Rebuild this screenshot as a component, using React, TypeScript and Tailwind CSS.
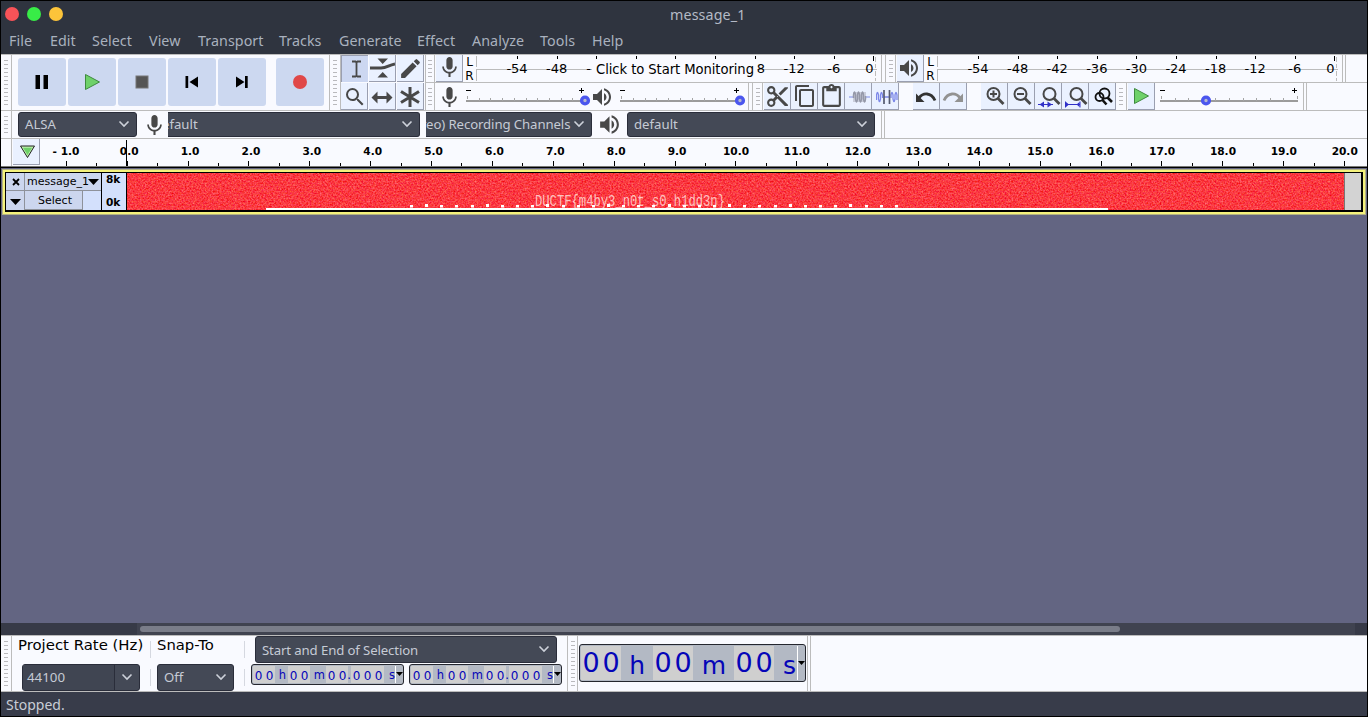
import React from "react";
import {
  MdMic, MdVolumeUp, MdContentCut, MdContentCopy, MdContentPaste, MdEdit, MdSearch,
} from "react-icons/md";

const DJ = "DejaVu Sans, sans-serif";

const menus: [string, string][] = [
  ["File", "w-[41px]"], ["Edit", "w-[42px]"], ["Select", "w-[57px]"], ["View", "w-[49px]"],
  ["Transport", "w-[81px]"], ["Tracks", "w-[60px]"], ["Generate", "w-[78px]"], ["Effect", "w-[55px]"],
  ["Analyze", "w-[68px]"], ["Tools", "w-[52px]"], ["Help", "w-[40px]"],
];

function Grip({ rows, className = "" }: { rows: number; className?: string }) {
  return (
    <div className={`flex shrink-0 items-center justify-center border-r border-[#bcbcbc] ${className}`}>
      <svg width="4" height={rows * 4 - 3} shapeRendering="crispEdges">
        {Array.from({ length: rows }, (_, i) => (
          <rect key={i} x="0" y={i * 4} width="4" height="1" fill="#b9b9bd" />
        ))}
      </svg>
    </div>
  );
}

function Btn({ children, className = "", active = false }: { children?: React.ReactNode; className?: string; active?: boolean }) {
  return (
    <div
      className={`flex h-[27px] w-[27px] shrink-0 items-center justify-center overflow-hidden ${
        active ? "border-t border-l border-[#9a9fb0] bg-[#ccd7f1]" : "border-r border-b border-[#9a9fb0] bg-[#eaf1ff]"
      } ${className}`}
    >
      {children}
    </div>
  );
}

function Meter({ overlay = false }: { overlay?: boolean }) {
  const labels = ["-54", "-48", "-42", "-36", "-30", "-24", "-18", "-12", "-6", "0"];
  return (
    <svg width="418" height="27" className="shrink-0" fontFamily={DJ} fontSize="13" textAnchor="middle">
      <g fill="none" stroke="#bcbcbc" shapeRendering="crispEdges">
        <path d="M13.5 1V12M13.5 15V26M13 14.5H410" />
        <path d="M412.5 2V13M412.5 16V26M410 14.5H414" strokeDasharray="5 2" />
      </g>
      <text x="6.5" y="10.5" fontSize="12">L</text>
      <text x="6.5" y="24.5" fontSize="12">R</text>
      {labels.map((l, i) => {
        const x = 54 + i * 39.6;
        const covered = overlay && i > 1 && i < 7;
        return (
          <g key={l}>
            <rect x={Math.round(x)} y="1" width="1" height={i === 9 ? 5 : 3} fill="#000" shapeRendering="crispEdges" />
            {!covered && <text x={i === 9 ? x - 4 : x} y="18">{l}</text>}
          </g>
        );
      })}
      {overlay && (
        <g>
          <text x="125.5" y="18">-</text>
          <text x="298" y="18">8</text>
          <rect x="129" y="5" width="165" height="19" fill="#fafaff" />
          <text x="212" y="19" fontSize="13.2" textLength="158">Click to Start Monitoring</text>
        </g>
      )}
    </svg>
  );
}

function Slider({ width, value, ticks, className = "" }: { width: number; value: number; ticks: number; className?: string }) {
  const step = (width - 2) / ticks;
  return (
    <svg width={width + 6} height="27" className={`shrink-0 ${className}`}>
      <g shapeRendering="crispEdges">
        <rect x="0" y="17" width={width} height="2" fill="#9b9b9b" />
        {Array.from({ length: ticks + 1 }, (_, i) => (
          <rect key={i} x={Math.round(i * step) + 1} y={i === 0 || i === ticks ? 13 : 15} width="1" height="3" fill="#a5a5a5" />
        ))}
        <path d={`M0 7.5H5M${width - 6} 7.5h5M${width - 3.5} 5v5`} stroke="#000" />
      </g>
      <circle cx={value} cy="17.5" r="3.4" fill="#b6b8ce" stroke="#4b56ee" strokeWidth="3.4" />
    </svg>
  );
}

function Chevron() {
  return (
    <svg width="12" height="8" viewBox="0 0 12 8" className="mb-[2px] shrink-0">
      <path d="M1.5 1.5L6 6L10.5 1.5" fill="none" stroke="#cdd1da" strokeWidth="1.6" />
    </svg>
  );
}

function Combo({ text, className }: { text: string; className: string }) {
  return (
    <div
      className={`flex shrink-0 items-center justify-between overflow-hidden border border-[#2a2d3a] bg-[#444956] pr-[6px] font-['Noto_Sans',sans-serif] text-[13.2px] whitespace-nowrap text-[#c6cbd5] ${className}`}
    >
      <span>{text}</span>
      <Chevron />
    </div>
  );
}

const PLAY = (
  <svg width="17" height="18" viewBox="0 0 17 18">
    <path d="M1.5 1.5V16.5L15.5 9Z" fill="#6ed169" stroke="#3f8a3f" strokeWidth="1" />
  </svg>
);

function TransportIcon({ kind }: { kind: string }) {
  if (kind === "play") return PLAY;
  return (
    <svg width="14" height="14" viewBox="0 0 14 14">
      {kind === "pause" && <path d="M0.5 0H5V14H0.5ZM8.5 0H13V14H8.5Z" />}
      {kind === "stop" && <rect x="1" y="1" width="12" height="12" fill="#555" stroke="#777" strokeWidth="1" />}
      {kind === "start" && <path d="M0.5 1H3.2V13H0.5ZM13 1.5V12.5L4.5 7Z" />}
      {kind === "end" && <path d="M10 1H12.7V13H10ZM1 1.5V12.5L9.5 7Z" />}
      {kind === "record" && <circle cx="7" cy="7" r="7" fill="#e04848" />}
    </svg>
  );
}

const G = "#484848";

function ZoomGlyph({ kind }: { kind: string }) {
  if (kind === "toggle")
    return (
      <svg width="22" height="22" viewBox="0 0 22 22" fill="none" stroke="#111" strokeWidth="1.8">
        <circle cx="7.5" cy="11" r="4" />
        <circle cx="12.5" cy="7.5" r="5" />
        <path d="M10.5 14L14.5 18.5M15.5 11.5L20 16" strokeWidth="2.6" />
      </svg>
    );
  const shifted = kind === "sel" || kind === "fit";
  const cx = shifted ? 12.5 : 10.5;
  return (
    <svg width="24" height="22" viewBox="0 0 24 22" fill="none" stroke={G} className="ml-[1px] shrink-0">
      <circle cx={cx} cy="8" r="6" strokeWidth="2" />
      <path d={`M${cx + 4.3} 12.3L${cx + 10} 18`} strokeWidth="2.8" />
      {kind === "in" && <path d="M7 8H14M10.5 4.5V11.5" strokeWidth="2" />}
      {kind === "out" && <path d="M7 8H14" strokeWidth="2" />}
      {kind === "sel" && (
        <g fill="#3030c8" stroke="#3030c8">
          <path d="M1 18.5H16" />
          <path d="M7 15.5V21.5L2.5 18.5ZM10.5 15.5V21.5L15 18.5Z" stroke="none" />
        </g>
      )}
      {kind === "fit" && (
        <g fill="#3030c8" stroke="#3030c8">
          <path d="M1.5 18.5H16M1.5 15.5V21.5M16 15.5V21.5" />
          <path d="M2 16V21L5 18.5ZM15.5 16V21L12.5 18.5Z" stroke="none" />
        </g>
      )}
    </svg>
  );
}

function Curl({ redo = false }: { redo?: boolean }) {
  return (
    <svg width="22" height="14" viewBox="0 0 22 14" className="shrink-0">
      <g transform={redo ? "translate(22 0) scale(-1 1)" : undefined}>
        <path d="M4 8C8 2.5 16 2 20 10.5" fill="none" stroke={redo ? "#929292" : "#333"} strokeWidth="2.8" />
        <path d="M1 3.5V12H9.5Z" fill={redo ? "#929292" : "#333"} />
      </g>
    </svg>
  );
}

function Wave({ silence = false }: { silence?: boolean }) {
  return (
    <svg width="22" height="16" viewBox="0 0 22 16" fill="none" className="ml-[3px] shrink-0">
      {silence ? (
        <>
          <path d="M0.5 11V6Q1.5 1 2.5 6V10Q3.5 15 4.5 10V6Q5.5 1 6.5 6V9M8 8H14M15 9V6Q16 1 17 6V10Q18 15 19 10V6Q20 1 21 6V11" stroke="#7c88e8" strokeWidth="1.3" />
          <path d="M8 1V15M13.5 1V15" stroke="#555b70" strokeWidth="1.7" />
        </>
      ) : (
        <>
          <path d="M0 8H4M17 8H21" stroke="#a3aef0" strokeWidth="1.4" />
          <rect x="4" y="3" width="13" height="10" fill="#c9cddb" />
          <path d="M4.5 9V6Q5.5 0 6.5 6V10Q7.5 16 8.5 10V6Q9.5 0 10.5 6V10Q11.5 16 12.5 10V6Q13.5 0 14.5 6V10Q15.5 16 16.5 10V7" stroke="#9498a8" strokeWidth="1.5" />
        </>
      )}
    </svg>
  );
}

function Ruler() {
  const x0 = 87.2;
  const pitch = 60.87;
  const ticks = Array.from({ length: 43 }, (_, i) => i / 2 - 1);
  return (
    <svg width="1327" height="27" className="shrink-0" fontFamily={DJ} fontSize="10.6" fontWeight="bold" textAnchor="middle">
      {ticks.map((t) => {
        const whole = Number.isInteger(t);
        const x = x0 + t * pitch;
        return (
          <g key={t}>
            {x < 1326 && <rect x={Math.round(x - 0.5)} y={whole ? 22 : 24} width="1" height={whole ? 5 : 3} shapeRendering="crispEdges" />}
            {whole && (
              <text x={t < 0 ? x - 0.3 : t < 10 ? x + 2 : x + 0.1} y="16">
                {t < 0 ? "- 1.0" : t.toFixed(1)}
              </text>
            )}
          </g>
        );
      })}
      <rect x="86" y="1" width="1" height="26" shapeRendering="crispEdges" />
    </svg>
  );
}

function Spectrogram() {
  return (
    <svg width="1217" height="37" className="block shrink-0 bg-[#fa3a3e]">
      <defs>
        <filter id="grain" x="0" y="0" width="100%" height="100%" colorInterpolationFilters="sRGB">
          <feTurbulence type="fractalNoise" baseFrequency="0.6" numOctaves="2" seed="7" />
          <feColorMatrix values="0.1 0 0 0 0.93  0.6 0.15 0 0 -0.15  0.45 0 0.3 0 -0.12  0 0 0 0 1" />
        </filter>
      </defs>
      <rect width="1217" height="37" filter="url(#grain)" />
      <text x="408" y="33" fill="#ffdcd8" fillOpacity="0.85" fontFamily="Liberation Mono, monospace" fontSize="16" textLength="190" lengthAdjust="spacingAndGlyphs">
        DUCTF{"{"}m4by3_n0t_s0_h1dd3n{"}"}
      </text>
      <g fill="#fff">
        {Array.from({ length: 33 }, (_, i) => (
          <rect key={i} x={Math.round(283 + i * 15.15)} y={i % 4 === 1 ? 31 : 32} width="3" height={i % 4 === 1 ? 3 : 2.5} />
        ))}
        <rect x="139" y="35" width="842" height="2" />
      </g>
    </svg>
  );
}

function TimeField({ big = false }: { big?: boolean }) {
  const parts: [string, boolean, string][] = big
    ? [["00", true, "w-[40px]"], ["h", false, "w-[32px]"], ["00", true, "w-[40px]"], ["m", false, "w-[41px]"], ["00", true, "w-[40px]"], ["s", false, "w-[23px]"]]
    : [["00", true, "w-[22px]"], ["h", false, "w-[13px]"], ["00", true, "w-[22px]"], ["m", false, "w-[16px]"], ["00", true, "w-[22px]"], [".", false, "w-[3px]"], ["000", true, "w-[33px]"], ["s", false, "w-[11px]"]];
  return (
    <div
      className={`flex shrink-0 overflow-hidden rounded-[3px] border border-[#24262e] bg-[#b3b9c4] font-['DejaVu_Sans',sans-serif] text-[#0505b8] ${
        big ? "h-[38px] w-[227px] p-[1px] text-[27px]" : "h-[21px] w-[153px] p-[1px] text-[12px]"
      }`}
    >
      {parts.map(([t, digit, w], i) => (
        <div
          key={i}
          className={`flex shrink-0 items-center ${w} ${
            digit ? `justify-around bg-[#cfcfcf] ${big ? "" : "pt-[2px]"}` : `justify-end ${big ? "pt-[6px] text-[25px]" : "pt-[3px] text-[11.5px]"}`
          }`}
        >
          {digit ? t.split("").map((c, k) => <span key={k}>{c}</span>) : <span className={t === "h" ? (big ? "pr-[8px]" : "pr-[2px]") : t === "m" ? (big ? "pr-[8px]" : "pr-[1px]") : big ? "pr-[1px]" : "pr-0"}>{t}</span>}
        </div>
      ))}
      <div className="flex flex-1 items-center justify-center border-l border-white">
        <svg width="7" height="4" className={big ? "shrink-0" : "mb-[2px] shrink-0"}><path d="M0 0H7L3.5 4Z" /></svg>
      </div>
    </div>
  );
}

const Dbl = ({ gap }: { gap: string }) => <div className={`shrink-0 self-stretch border-x border-[#bcbcbc] ${gap}`} />;

export default function App() {
  return (
    <div className="flex h-[717px] w-[1368px] flex-col overflow-hidden border border-black bg-[#f9faff] font-['DejaVu_Sans',sans-serif] text-black">
      <div className="flex h-[53px] shrink-0 flex-col bg-[#2f343f] font-['Noto_Sans',sans-serif] text-[14.3px] text-[#b4bac6]">
        <div className="flex h-[26px] items-center pl-[4px]">
          <div className="flex w-[665px] gap-[8px]">
            <div className="h-[14px] w-[14px] rounded-full bg-[#f85358]" />
            <div className="h-[14px] w-[14px] rounded-full bg-[#38ec47]" />
            <div className="h-[14px] w-[14px] rounded-full bg-[#fcc43a]" />
          </div>
          <span className="pt-[2px] tracking-[0.1px]">message_1</span>
        </div>
        <div className="flex h-[27px] items-center pt-[1px] pl-[8px] tracking-[0.05px] text-[#a9b1be]">
          {menus.map(([m, w]) => <span key={m} className={`${w} shrink-0`}>{m}</span>)}
        </div>
      </div>

      <div className="flex h-[57px] shrink-0 border-y border-[#bcbcbc]">
        <Grip rows={12} className="w-[11px]" />
        <div className="flex items-start gap-[2px] pt-[3px] pl-[6px]">
          {["pause", "play", "stop", "start", "end", "record"].map((k) => (
            <div key={k} className={`flex h-[48px] w-[48px] items-center justify-center rounded-[3px] bg-[#ccd8f0] ${k === "record" ? "ml-[8px]" : ""}`}>
              <TransportIcon kind={k} />
            </div>
          ))}
        </div>
        <Grip rows={12} className="ml-[5px] w-[12px] border-l" />
        <div className="grid grid-cols-[28px_28px_28px] grid-rows-[28px_27px]">
          <Btn active>
            <svg width="11" height="18" viewBox="0 0 11 18" fill="none" stroke={G} strokeWidth="1.8" className="ml-[2px]"><path d="M1 1.5H4.5L5.5 2.5L6.5 1.5H10M5.5 2V16M1 16.5H4.5L5.5 15.5L6.5 16.5H10" /></svg>
          </Btn>
          <Btn>
            <svg width="25" height="20" viewBox="0 0 25 20"><path d="M7.5 0.5H18L12.7 6ZM7.5 19.5H18L12.7 14Z" fill={G} /><path d="M0 10H11C17 10 18 7.5 25 6" fill="none" stroke={G} strokeWidth="3" /></svg>
          </Btn>
          <Btn><MdEdit size={25} color={G} className="shrink-0" /></Btn>
          <Btn className="pt-[2px] pl-[2px]"><MdSearch size={24} color={G} className="shrink-0" /></Btn>
          <Btn className="pt-[2px]">
            <svg width="22" height="13" viewBox="0 0 22 13"><path d="M0.5 6.5L6.5 0.5V5H15.5V0.5L21.5 6.5L15.5 12.5V8H6.5V12.5Z" fill={G} /></svg>
          </Btn>
          <Btn className="pt-[1px]">
            <svg width="20" height="20" viewBox="0 0 20 20"><path d="M10 0V20M1 4.5L19 15.5M1 15.5L19 4.5" stroke={G} strokeWidth="3" /></svg>
          </Btn>
        </div>
        <div className="flex flex-1 flex-col border-l border-[#bcbcbc]">
          <div className="flex h-[28px] border-b border-[#bcbcbc]">
            <Grip rows={5} className="w-[9px]" />
            <Btn className="ml-[1px]"><MdMic size={25} color={G} className="mb-[1px] shrink-0" /></Btn>
            <Meter overlay />
            <Dbl gap="w-[5px]" />
            <Grip rows={5} className="w-[10px]" />
            <Btn className="ml-[1px] pr-[2px] pb-[1px]"><MdVolumeUp size={24} color={G} className="shrink-0" /></Btn>
            <Meter />
            <Dbl gap="w-[4px]" />
          </div>
          <div className="flex h-[27px]">
            <Grip rows={5} className="w-[9px]" />
            <div className="flex w-[31px] items-center pt-[1px] pl-[2px]"><MdMic size={25} color={G} className="shrink-0" /></div>
            <Slider width={119} value={119} ticks={10} />
            <div className="flex w-[29px] items-center"><MdVolumeUp size={24} color={G} className="-ml-[1px] shrink-0" /></div>
            <Slider width={120} value={120} ticks={10} />
            <div className="w-[2px]" />
            <Dbl gap="w-[5px]" />
            <Grip rows={5} className="w-[10px]" />
            <div className="ml-[1px] flex">
              <Btn><MdContentCut size={25} color={G} className="shrink-0" /></Btn>
              <Btn><MdContentCopy size={24} color={G} className="ml-[1px] shrink-0" /></Btn>
              <Btn className="pt-[1px]"><MdContentPaste size={25} color={G} className="ml-[1px] shrink-0" /></Btn>
              <Btn className="pt-[2px]"><Wave /></Btn>
              <Btn className="pt-[2px]"><Wave silence /></Btn>
              <Btn className="ml-[14px] pt-[2px]"><Curl /></Btn>
              <Btn className="pt-[2px]"><Curl redo /></Btn>
              <Btn className="ml-[14px] pt-[2px]"><ZoomGlyph kind="in" /></Btn>
              <Btn className="pt-[2px]"><ZoomGlyph kind="out" /></Btn>
              <Btn className="pt-[2px]"><ZoomGlyph kind="sel" /></Btn>
              <Btn className="pt-[2px]"><ZoomGlyph kind="fit" /></Btn>
              <Btn className="pt-[1px] pl-[1px]"><ZoomGlyph kind="toggle" /></Btn>
            </div>
            <Grip rows={5} className="w-[11px]" />
            <Btn className="ml-[1px]">{PLAY}</Btn>
            <Slider width={138} value={46} ticks={10} className="ml-[5px]" />
            <div className="-ml-[1px] flex"><Dbl gap="w-[4px]" /></div>
          </div>
        </div>
      </div>

      <div className="flex h-[28px] shrink-0 border-b border-[#bcbcbc]">
        <Grip rows={5} className="w-[11px]" />
        <Combo text="ALSA" className="mt-[1px] ml-[6px] h-[25px] w-[119px] rounded-[3px] pl-[6px]" />
        <div className="flex w-[31px] items-center pt-[1px] pl-[5px]"><MdMic size={25} color={G} className="shrink-0" /></div>
        <Combo text="efault" className="mt-[1px] h-[25px] w-[252px] rounded-r-[3px] border-l-0 pl-0 [&>span]:-ml-[6px]" />
        <Combo text="reo) Recording Channels" className="mt-[1px] ml-[6px] h-[25px] w-[166px] rounded-r-[3px] border-l-0 tracking-[-0.1px] [&>span]:-ml-[5px]" />
        <div className="flex w-[35px] items-center pl-[5px]"><MdVolumeUp size={25} color={G} className="shrink-0" /></div>
        <Combo text="default" className="mt-[1px] h-[25px] w-[248px] rounded-[3px] pl-[6px]" />
        <div className="w-[6px]" />
        <Dbl gap="w-[4px]" />
      </div>

      <div className="flex h-[28px] shrink-0 border-b border-[#777]">
        <div className="w-[11px] shrink-0 border-r border-[#bcbcbc]" />
        <div className="ml-[1px] flex h-[26px] w-[27px] shrink-0 items-center justify-center border-r border-b border-[#9a9fb0] bg-[#eaf1ff] pl-[2px]">
          <svg width="17" height="14" viewBox="0 0 17 14"><path d="M1.5 1H15.5L8.5 12.5Z" fill="#bff0b0" stroke="#222" /><path d="M4 2.8H13L8.5 10Z" fill="#6ed169" /></svg>
        </div>
        <Ruler />
      </div>

      <div className="flex h-[456px] shrink-0 flex-col bg-[#636582]">
        <div className="h-[1px] bg-black" />
        <div className="mt-[1px] mr-[1px] ml-[1px] border border-[#b3b285] bg-[#f5f27c]">
          <div className="m-[2px] flex h-[40px] border-t border-r-2 border-b-2 border-l border-black">
            <div className="flex w-[95px] shrink-0 flex-col bg-[#d3e0fc] text-[11px]">
              <div className="flex h-[18px] border-b border-[#8e929b] bg-[#ccd6ee]">
                <div className="flex w-[19px] items-center justify-center border-r border-[#8e929b] pt-[1px] pl-[1px]">
                  <svg width="8" height="8"><path d="M1 1L7 7M7 1L1 7" stroke="#000" strokeWidth="1.8" /></svg>
                </div>
                <div className="flex flex-1 items-center justify-between pl-[2px]">
                  <span className="pt-[1px] whitespace-nowrap">message_1</span>
                  <svg width="11" height="6" className="mr-[2px] -ml-[4px] shrink-0"><path d="M0 0H11L5.5 6Z" /></svg>
                </div>
              </div>
              <div className="flex h-[19px]">
                <div className="flex w-[19px] items-center justify-center border-r border-[#8e929b] bg-[#ccd6ee] pt-[2px]">
                  <svg width="11" height="6"><path d="M0 0H11L5.5 6Z" /></svg>
                </div>
                <div className="flex w-[58px] items-center justify-center border-r border-b border-[#8e929b] bg-[#ccd6ee] pt-[2px] pl-[3px]">Select</div>
              </div>
            </div>
            <div className="flex w-[26px] shrink-0 flex-col justify-between border-x border-black bg-[#d3e0fc] pb-[1px] pl-[4px] text-[10.6px] leading-[13px] font-bold">
              <span>8k</span>
              <span>0k</span>
            </div>
            <Spectrogram />
            <div className="flex-1 border-l border-[#777] bg-[#d3d3d3]" />
          </div>
        </div>
      </div>

      <div className="flex h-[12px] shrink-0 items-center bg-[#373a47]">
        <div className="ml-[136px] flex h-full w-[1218px] items-center bg-[#404350] pl-[3px]">
          <div className="h-[6px] w-[980px] rounded-full bg-[#7a7d89]" />
        </div>
      </div>

      <div className="flex h-[57px] shrink-0 border-y border-[#bcbcbc]">
        <Grip rows={12} className="w-[11px]" />
        <div className="flex w-[138px] flex-col pl-[6px] text-[14.9px]">
          <div className="h-[28px] leading-[18px] whitespace-nowrap">Project Rate (Hz)</div>
          <div className="ml-[4px] flex h-[27px] w-[118px] rounded-[3px] border border-[#2a2d3a] bg-[#444956] font-['Noto_Sans',sans-serif] text-[13.3px] text-[#c6cbd5]">
            <div className="flex w-[92px] items-center border-r border-[#2a2d3a] bg-[#404552] pl-[4px]">44100</div>
            <div className="flex flex-1 items-center justify-center"><Chevron /></div>
          </div>
        </div>
        <div className="flex w-[1px] shrink-0 flex-col gap-[11px] pt-[5px]">
          <div className="h-[17px] bg-[#d5d8e0]" /><div className="h-[17px] bg-[#d5d8e0]" />
        </div>
        <div className="flex w-[93px] flex-col pl-[6px] text-[14.8px]">
          <div className="h-[28px] leading-[18px]">Snap-To</div>
          <Combo text="Off" className="h-[27px] w-[77px] rounded-[3px] pl-[6px]" />
        </div>
        <div className="flex w-[1px] shrink-0 flex-col gap-[11px] pt-[5px]">
          <div className="h-[17px] bg-[#d5d8e0]" /><div className="h-[17px] bg-[#d5d8e0]" />
        </div>
        <div className="flex w-[322px] flex-col pl-[6px]">
          <Combo text="Start and End of Selection" className="ml-[4px] h-[27px] w-[302px] rounded-[3px] pl-[6px] tracking-[-0.12px] [&>span]:pt-[2px]" />
          <div className="mt-[1px] flex gap-[5px]"><TimeField /><TimeField /></div>
        </div>
        <Grip rows={12} className="w-[11px] border-l" />
        <div className="flex items-start pt-[8px] pl-[1px]"><TimeField big /></div>
        <div className="w-[1px]" />
        <Dbl gap="w-[4px]" />
      </div>

      <div className="flex flex-1 items-center bg-[#383c4a] pl-[5px] font-['Noto_Sans',sans-serif] text-[14px] text-[#c9cdd6]">Stopped.</div>
    </div>
  );
}
